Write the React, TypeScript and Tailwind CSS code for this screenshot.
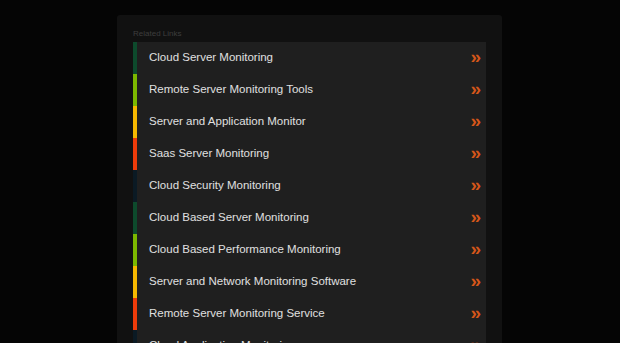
import React from 'react'

const links = [
    { label: 'Cloud Server Monitoring', bar: 'bg-[#0d4a2c]' },
    { label: 'Remote Server Monitoring Tools', bar: 'bg-[#7cb800]' },
    { label: 'Server and Application Monitor', bar: 'bg-[#f6b800]' },
    { label: 'Saas Server Monitoring', bar: 'bg-[#ee3b0a]' },
    { label: 'Cloud Security Monitoring', bar: 'bg-[#0b1a24]' },
    { label: 'Cloud Based Server Monitoring', bar: 'bg-[#0d4a2c]' },
    { label: 'Cloud Based Performance Monitoring', bar: 'bg-[#7cb800]' },
    { label: 'Server and Network Monitoring Software', bar: 'bg-[#f6b800]' },
    { label: 'Remote Server Monitoring Service', bar: 'bg-[#ee3b0a]' },
    { label: 'Cloud Application Monitoring', bar: 'bg-[#0b1a24]' },
]

export default function App() {
    return (
        <div className="h-[343px] w-[620px] overflow-hidden bg-[#050505] font-['Liberation_Sans',Arial,sans-serif]">
            <div className="ml-[117px] mt-[15px] w-[385px] rounded-[3px] bg-[#111111] px-4 pt-[11px] pb-4">
                <div className="h-[16px] text-[8px] leading-[15px] text-[#3e3e3e]">Related Links</div>
                <ul className="bg-[#1f1f1f]">
                    {links.map((link) => (
                        <li key={link.label} className="flex h-8 items-center">
                            <span className={`h-full w-1 ${link.bar}`} />
                            <span className="flex-1 pl-3 text-[11.5px] text-[#e0e0e0]">{link.label}</span>
                            <span className="pr-[5px] pb-[3px] text-[19px] leading-none font-bold text-[#d4561a]">»</span>
                        </li>
                    ))}
                </ul>
            </div>
        </div>
    )
}
